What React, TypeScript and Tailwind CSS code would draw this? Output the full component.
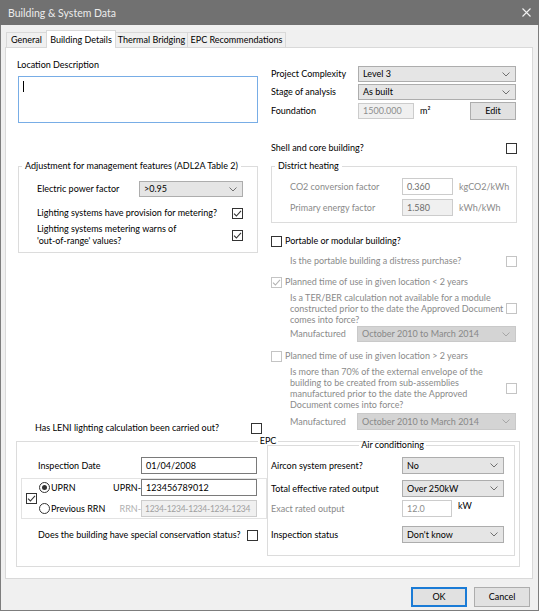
import React from "react";

const muted = "text-[#8a8a8a]";

function Chevron({ faded }: { faded?: boolean }) {
  return (
    <svg width="8" height="5" viewBox="0 0 8 5" className="shrink-0">
      <path d="M0.5 0.5 L4 4 L7.5 0.5" fill="none" stroke={faded ? "#a6a6a6" : "#707070"} strokeWidth="1" />
    </svg>
  );
}

function Combo({ value, className = "", disabled }: { value: string; className?: string; disabled?: boolean }) {
  return (
    <div
      className={`flex items-center justify-between whitespace-nowrap border pl-[4px] pr-[5px] ${
        disabled ? "border-[#c9c9c9] bg-[#d4d4d4] text-[#888]" : "border-[#adadad] bg-[#e5e5e5] text-black"
      } ${className}`}
    >
      <span>{value}</span>
      <Chevron faded={disabled} />
    </div>
  );
}

type Tone = "normal" | "readonly" | "disabled";

function Field({ value, className = "", tone = "normal" }: { value: string; className?: string; tone?: Tone }) {
  const look =
    tone === "normal"
      ? "border-[#7a7a7a] bg-white text-black"
      : tone === "readonly"
      ? "border-[#cccccc] bg-white text-[#6d6d6d]"
      : "border-[#cccccc] bg-[#f0f0f0] text-[#8d8d8d]";
  return (
    <div className={`flex items-center overflow-hidden whitespace-nowrap border pl-[4px] ${look} ${className}`}>{value}</div>
  );
}

function Check({ checked, disabled }: { checked?: boolean; disabled?: boolean }) {
  return (
    <span
      className={`flex h-[11px] w-[11px] shrink-0 items-center justify-center border bg-white ${
        disabled ? "border-[#c4c4c4]" : "border-[#333333]"
      }`}
    >
      {checked && (
        <svg width="9" height="9" viewBox="0 0 9 9">
          <path d="M1 4.6 L3.4 7 L8 1.8" fill="none" stroke={disabled ? "#b3b3b3" : "#333"} strokeWidth="1.1" />
        </svg>
      )}
    </span>
  );
}

function Radio({ checked }: { checked?: boolean }) {
  return (
    <span className="flex h-[11px] w-[11px] shrink-0 items-center justify-center rounded-full border border-[#333333] bg-white">
      {checked && <span className="h-[5px] w-[5px] rounded-full bg-[#333333]" />}
    </span>
  );
}

function Tab({ label, active, className = "" }: { label: string; active?: boolean; className?: string }) {
  return (
    <div
      className={`flex items-center justify-center whitespace-nowrap border border-b-0 border-[#d9d9d9] ${
        active ? "relative z-10 mb-[-1px] h-[18px] bg-white" : "h-[15px] bg-[#f0f0f0]"
      } ${className}`}
    >
      {label}
    </div>
  );
}

export default function App() {
  return (
    <div className="flex h-[611px] w-[539px] flex-col border-x border-b border-[#7d7d7d] bg-[#f0f0f0] font-['Lato',sans-serif] text-[9px] leading-[12px] text-black">
      {/* title bar */}
      <div className="-mx-px flex h-[25px] shrink-0 items-center justify-between bg-[#717171] pl-[8px] pr-[8px] text-[10.5px] text-[#ececec]">
        <span>Building &amp; System Data</span>
        <svg width="9" height="9" viewBox="0 0 9 9">
          <path d="M0.5 0.5 L8.5 8.5 M8.5 0.5 L0.5 8.5" stroke="#f2f2f2" strokeWidth="1.1" />
        </svg>
      </div>

      {/* tabs */}
      <div className="flex h-[22px] shrink-0 items-end pl-[5px]">
        <Tab label="General" className="w-[41px]" />
        <Tab label="Building Details" active className="-ml-px w-[70px]" />
        <Tab label="Thermal Bridging" className="-ml-px w-[73px]" />
        <Tab label="EPC Recommendations" className="-ml-px w-[99px]" />
      </div>

      <div className="ml-[4px] flex h-[532px] w-[528px] shrink-0 flex-col border border-[#d9d9d9] bg-white">
        <div className="flex h-[386px] pl-[11px]">
          {/* left column */}
          <div className="flex w-[242px] flex-col">
            <div className="mt-[11px]">Location Description</div>
            <div className="ml-[1px] mt-[5px] h-[47px] w-[240px] border border-[#78ade6] pl-[4px] pt-[4px]">
              <div className="h-[11px] w-px bg-black" />
            </div>

            <fieldset className="ml-[1px] mt-[37px] w-[240px] border border-[#dcdcdc] pb-[5px]">
              <legend className="ml-[3px] px-[3px]">Adjustment for management features (ADL2A Table 2)</legend>
              <div className="mt-[9px] flex h-[16px] items-center pl-[18px]">
                <span className="w-[102px]">Electric power factor</span>
                <Combo value=">0.95" className="h-[16px] w-[104px]" />
              </div>
              <div className="mt-[10px] flex h-[12px] items-center justify-between pl-[18px] pr-[14px]">
                <span>Lighting systems have provision for metering?</span>
                <Check checked />
              </div>
              <div className="mt-[4px] flex items-center justify-between pl-[18px] pr-[14px]">
                <span>
                  Lighting systems metering warns of
                  <br />
                  'out-of-range' values?
                </span>
                <Check checked />
              </div>
            </fieldset>

            <div className="mt-auto flex h-[12px] w-[245px] items-center justify-between pl-[18px]">
              <span>Has LENI lighting calculation been carried out?</span>
              <Check />
            </div>
          </div>

          {/* right column */}
          <div className="ml-[12px] flex w-[246px] flex-col">
            <div className="mt-[18px] flex h-[16px] items-center">
              <span className="w-[87px]">Project Complexity</span>
              <Combo value="Level 3" className="h-[16px] w-[158px]" />
            </div>
            <div className="mt-[2px] flex h-[16px] items-center">
              <span className="w-[87px]">Stage of analysis</span>
              <Combo value="As built" className="h-[16px] w-[158px]" />
            </div>
            <div className="mt-[2px] flex h-[18px] items-center">
              <span className="w-[87px]">Foundation</span>
              <Field value="1500.000" tone="disabled" className="h-[16px] w-[56px]" />
              <span className="ml-[6px]">m²</span>
              <div className="ml-auto mr-[1px] flex h-[18px] w-[46px] items-center justify-center border border-[#adadad] bg-[#e1e1e1]">
                Edit
              </div>
            </div>

            <div className="mt-[22px] flex h-[12px] items-center justify-between">
              <span>Shell and core building?</span>
              <Check />
            </div>

            <fieldset className="mt-[6px] w-full border border-[#dcdcdc] pb-[6px]">
              <legend className="ml-[3px] px-[3px]">District heating</legend>
              <div className="mt-[6px] flex h-[17px] items-center pl-[18px]">
                <span className={`w-[112px] ${muted}`}>CO2 conversion factor</span>
                <Field value="0.360" tone="readonly" className="h-[17px] w-[51px]" />
                <span className={`ml-[6px] ${muted}`}>kgCO2/kWh</span>
              </div>
              <div className="mt-[4px] flex h-[17px] items-center pl-[18px]">
                <span className={`w-[112px] ${muted}`}>Primary energy factor</span>
                <Field value="1.580" tone="disabled" className="h-[17px] w-[51px] !text-[#6d6d6d]" />
                <span className={`ml-[6px] ${muted}`}>kWh/kWh</span>
              </div>
            </fieldset>

            <div className="mt-[12px] flex h-[12px] items-center">
              <Check />
              <span className="ml-[3px]">Portable or modular building?</span>
            </div>
            <div className="mt-[8px] flex h-[12px] items-center justify-between pl-[19px]">
              <span className={muted}>Is the portable building a distress purchase?</span>
              <Check disabled />
            </div>

            <div className="mt-[9px] flex h-[12px] items-center">
              <Check checked disabled />
              <span className={`ml-[3px] ${muted}`}>Planned time of use in given location &lt; 2 years</span>
            </div>
            <div className="mt-[4px] flex items-center justify-between pl-[19px] leading-[11px]">
              <span className={muted}>
                Is a TER/BER calculation not available for a module
                <br />
                constructed prior to the date the Approved Document
                <br />
                comes into force?
              </span>
              <Check disabled />
            </div>
            <div className="mt-[1px] flex h-[16px] items-center pl-[19px]">
              <span className={`w-[67px] ${muted}`}>Manufactured</span>
              <Combo value="October 2010 to March 2014" disabled className="h-[16px] w-[159px]" />
            </div>

            <div className="mt-[8px] flex h-[12px] items-center">
              <Check disabled />
              <span className={`ml-[3px] ${muted}`}>Planned time of use in given location &gt; 2 years</span>
            </div>
            <div className="mt-[4px] flex items-center justify-between pl-[19px] leading-[11px]">
              <span className={muted}>
                Is more than 70% of the external envelope of the
                <br />
                building to be created from sub-assemblies
                <br />
                manufactured prior to the date the Approved
                <br />
                Document comes into force?
              </span>
              <Check disabled />
            </div>
            <div className="mt-[3px] flex h-[17px] items-center pl-[19px]">
              <span className={`w-[67px] ${muted}`}>Manufactured</span>
              <Combo value="October 2010 to March 2014" disabled className="h-[17px] w-[159px]" />
            </div>
          </div>
        </div>

        {/* EPC */}
        <fieldset className="ml-[10px] mt-[1px] h-[132px] w-[504px] border border-[#dcdcdc]">
          <legend className="mx-auto px-[2px]">EPC</legend>
          <div className="flex">
            <div className="flex w-[250px] flex-col">
              <div className="mt-[10px] flex h-[17px] items-center pl-[21px]">
                <span className="w-[103px]">Inspection Date</span>
                <Field value="01/04/2008" className="h-[17px] w-[116px]" />
              </div>

              <div className="ml-[4px] mt-[4px] flex w-[246px] items-center border border-[#e3e3e3] pb-[1px] pl-[4px]">
                <Check checked />
                <div className="ml-[2px] flex flex-col gap-[4px]">
                  <div className="flex h-[17px] items-center">
                    <div className="flex w-[102px] items-center justify-between">
                      <span className="flex items-center">
                        <Radio checked />
                        <span className="ml-[1px]">UPRN</span>
                      </span>
                      <span>UPRN-</span>
                    </div>
                    <Field value="123456789012" className="h-[17px] w-[116px]" />
                  </div>
                  <div className="flex h-[17px] items-center">
                    <div className="flex w-[102px] items-center justify-between">
                      <span className="flex items-center">
                        <Radio />
                        <span className="ml-[1px]">Previous RRN</span>
                      </span>
                      <span className="text-[#b0b0b0]">RRN-</span>
                    </div>
                    <Field
                      value="1234-1234-1234-1234-1234"
                      tone="disabled"
                      className="h-[17px] w-[116px] !pl-[3px] text-[8.5px] tracking-[-0.25px] !text-[#a0a0a0]"
                    />
                  </div>
                </div>
              </div>

              <div className="mt-[10px] flex h-[12px] w-[241px] items-center justify-between pl-[21px]">
                <span>Does the building have special conservation status?</span>
                <Check />
              </div>
            </div>

            <fieldset className="mt-[-8px] w-[248px] border border-[#dcdcdc] pb-[12px] pl-[3px]">
              <legend className="mx-auto px-[2px]">Air conditioning</legend>
              <div className="mt-[6px] flex h-[17px] items-center">
                <span className="w-[131px]">Aircon system present?</span>
                <Combo value="No" className="h-[17px] w-[102px]" />
              </div>
              <div className="mt-[6px] flex h-[17px] items-center">
                <span className="w-[131px]">Total effective rated output</span>
                <Combo value="Over 250kW" className="h-[17px] w-[102px]" />
              </div>
              <div className="mt-[3px] flex h-[17px] items-center">
                <span className={`w-[131px] ${muted}`}>Exact rated output</span>
                <Field value="12.0" tone="readonly" className="h-[17px] w-[50px] !text-[#8d8d8d]" />
                <span className="ml-[6px] self-start">kW</span>
              </div>
              <div className="mt-[9px] flex h-[17px] items-center">
                <span className="w-[131px]">Inspection status</span>
                <Combo value="Don't know" className="h-[17px] w-[102px]" />
              </div>
            </fieldset>
          </div>
        </fieldset>
      </div>

      {/* footer buttons */}
      <div className="mt-[8px] flex justify-end gap-[7px] pr-[8px]">
        <div className="flex h-[20px] w-[56px] items-center justify-center border-2 border-[#1a7bd6] bg-[#e1e1e1]">OK</div>
        <div className="flex h-[20px] w-[56px] items-center justify-center border border-[#adadad] bg-[#e1e1e1]">Cancel</div>
      </div>
    </div>
  );
}
